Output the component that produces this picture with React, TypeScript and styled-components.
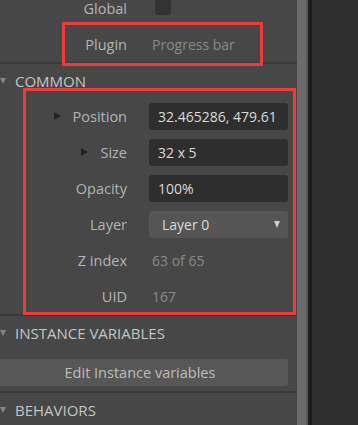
import styled, { createGlobalStyle } from "styled-components";

const GlobalStyle = createGlobalStyle`
  html, body {
    margin: 0;
    padding: 0;
    background: #2f2f2f;
  }
  body {
    font-family: "Open Sans", "Noto Sans", sans-serif;
    -webkit-font-smoothing: antialiased;
  }
`;

type Prop = {
  label: string;
  value: string;
  kind: "input" | "select" | "text";
  expandable?: boolean;
};

const commonProps: Prop[] = [
  { label: "Position", value: "32.465286, 479.61", kind: "input", expandable: true },
  { label: "Size", value: "32 x 5", kind: "input", expandable: true },
  { label: "Opacity", value: "100%", kind: "input" },
  { label: "Layer", value: "Layer 0", kind: "select" },
  { label: "Z index", value: "63 of 65", kind: "text" },
  { label: "UID", value: "167", kind: "text" },
];

const App = () => {
  return (
    <>
      <GlobalStyle />
      <Screen>
        <Panel>
          <Row $top={-10}>
            <Label>Global</Label>
            <Checkbox />
          </Row>

          <Highlight>
            <Row>
              <Label>Plugin</Label>
              <DimValue>Progress bar</DimValue>
            </Row>
            <Annotation $top={-4} $bottom={-4} $left={62} $right={34} />
          </Highlight>

          <Divider />

          <SectionHeader>
            <DownArrow />
            <span>COMMON</span>
          </SectionHeader>

          <Highlight>
            {commonProps.map((p) => (
              <Row key={p.label}>
                <Label>
                  {p.expandable && <RightArrow />}
                  {p.label}
                </Label>
                {p.kind === "input" && <ValueBox>{p.value}</ValueBox>}
                {p.kind === "select" && (
                  <SelectBox>
                    <span>{p.value}</span>
                    <Caret />
                  </SelectBox>
                )}
                {p.kind === "text" && <DimValue>{p.value}</DimValue>}
              </Row>
            ))}
            <Annotation $top={-10} $bottom={-1} $left={23} $right={1} />
          </Highlight>

          <Divider />

          <SectionHeader>
            <DownArrow />
            <span>INSTANCE VARIABLES</span>
          </SectionHeader>
          <ButtonRow>
            <WideButton>Edit Instance variables</WideButton>
          </ButtonRow>

          <Divider />

          <SectionHeader>
            <DownArrow />
            <span>BEHAVIORS</span>
          </SectionHeader>
        </Panel>

        <ScrollTrack>
          <ScrollThumb />
          <ScrollEdge />
        </ScrollTrack>
        <DarkGap />
        <Backdrop />
      </Screen>
    </>
  );
};

export default App;

const Screen = styled.div`
  display: flex;
  width: 358px;
  height: 425px;
  overflow: hidden;
`;

const Panel = styled.div`
  width: 297px;
  flex-shrink: 0;
  background: #474747;
  display: flex;
  flex-direction: column;
  overflow: hidden;
`;

const Row = styled.div<{ $top?: number }>`
  display: grid;
  grid-template-columns: 127px 139px;
  column-gap: 22px;
  align-items: center;
  height: 36px;
  flex-shrink: 0;
  margin-top: ${(p) => (p.$top ? `${p.$top}px` : "0")};
`;

const Label = styled.div`
  display: flex;
  align-items: center;
  justify-content: flex-end;
  gap: 12px;
  color: #b4b4b4;
  font-size: 14.5px;
  white-space: nowrap;
`;

const RightArrow = styled.span`
  width: 0;
  height: 0;
  border-top: 4px solid transparent;
  border-bottom: 4px solid transparent;
  border-left: 7px solid #222;
`;

const Checkbox = styled.div`
  width: 16px;
  height: 17px;
  margin-left: 6px;
  margin-top: -3px;
  border-radius: 3px;
  background: #333333;
`;

const DimValue = styled.div`
  color: #8a8a8a;
  font-size: 14px;
  padding-left: 3px;
  white-space: nowrap;
`;

const ValueBox = styled.div`
  height: 27px;
  box-sizing: border-box;
  padding: 0 0 0 9px;
  display: flex;
  align-items: center;
  background: #2e2e2e;
  border-radius: 3px;
  color: #dadada;
  font-size: 14px;
  white-space: nowrap;
  overflow: hidden;
`;

const SelectBox = styled(ValueBox)`
  background: #555555;
  padding: 0 8px 0 13px;
  justify-content: space-between;
`;

const Caret = styled.span`
  width: 0;
  height: 0;
  border-left: 3.5px solid transparent;
  border-right: 3.5px solid transparent;
  border-top: 7px solid #d0d0d0;
`;

const Highlight = styled.div`
  position: relative;
  display: flex;
  flex-direction: column;
`;

const Annotation = styled.div<{ $top: number; $bottom: number; $left: number; $right: number }>`
  position: absolute;
  top: ${(p) => p.$top}px;
  bottom: ${(p) => p.$bottom}px;
  left: ${(p) => p.$left}px;
  right: ${(p) => p.$right}px;
  border: 3px solid #ef3b3b;
  pointer-events: none;
`;

const Divider = styled.div`
  height: 2px;
  flex-shrink: 0;
  background: #3a3a3a;
`;

const SectionHeader = styled.div`
  display: flex;
  align-items: center;
  gap: 9px;
  height: 34px;
  flex-shrink: 0;
  color: #c4c4c4;
  font-size: 15px;
  white-space: nowrap;
`;

const DownArrow = styled.span`
  width: 0;
  height: 0;
  border-left: 3px solid transparent;
  border-right: 3px solid transparent;
  border-top: 6px solid #858585;
`;

const ButtonRow = styled.div`
  padding: 9px 9px 5px 0;
  flex-shrink: 0;
`;

const WideButton = styled.div`
  margin-left: -8px;
  height: 27px;
  display: flex;
  align-items: center;
  justify-content: center;
  background: #575757;
  border-radius: 3px;
  color: #bdbdbd;
  font-size: 14.5px;
`;

const ScrollTrack = styled.div`
  display: flex;
  flex-shrink: 0;
`;

const ScrollThumb = styled.div`
  width: 9px;
  background: #6b6b6b;
`;

const ScrollEdge = styled.div`
  width: 2px;
  background: #595959;
`;

const DarkGap = styled.div`
  width: 4px;
  flex-shrink: 0;
  background: #1e1e1e;
`;

const Backdrop = styled.div`
  flex: 1;
  background: #2f2f2f;
`;
